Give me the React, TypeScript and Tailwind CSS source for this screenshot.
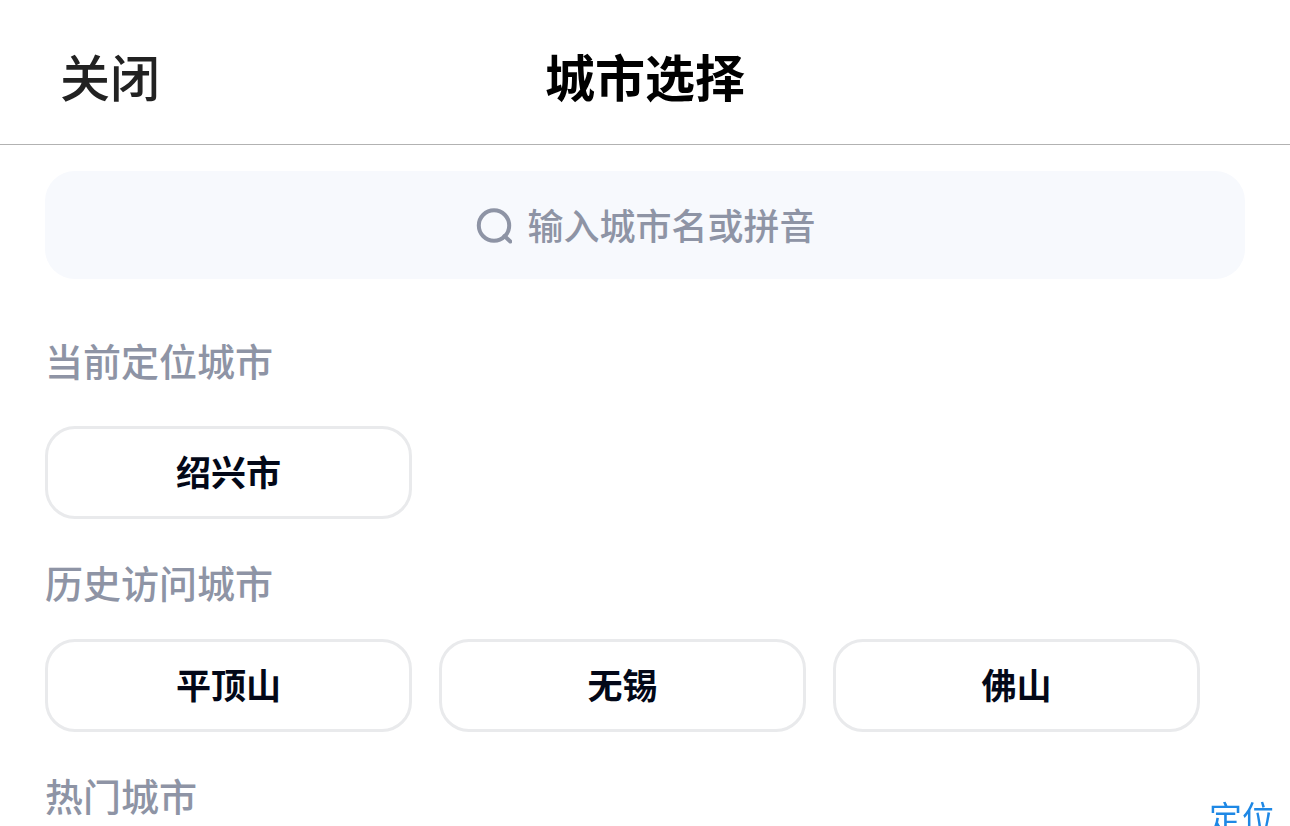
import React from "react";

const HISTORY_CITIES = ["平顶山", "无锡", "佛山"];

const SearchIcon = () => (
  <svg viewBox="0 0 36 36" className="w-9 h-9" fill="none" stroke="#8e94a5" strokeWidth="4" aria-hidden="true">
    <circle cx="18" cy="17.5" r="15.2" />
    <path d="M28.5 28L34.3 33.5" strokeLinecap="round" />
  </svg>
);

const SectionTitle = ({ children }: { children: React.ReactNode }) => (
  <h2 className="text-[38px] leading-[54px] font-medium text-[#8e94a5]">{children}</h2>
);

const CityButton = ({ name }: { name: string }) => (
  <button
    type="button"
    className="h-[93px] pb-0.5 rounded-[30px] border-3 border-[#e9eaec] bg-white text-[35px] font-bold text-[#030818]"
  >
    {name}
  </button>
);

const App: React.FC = () => {
  return (
    <div className="h-screen overflow-hidden bg-white font-['Noto_Sans_CJK_SC',sans-serif]">
      <header className="grid grid-cols-3 items-center h-[145px] pt-2 pb-0.5 px-[60px] border-b border-[#b2b2b2]">
        <button type="button" className="justify-self-start text-[50px] leading-[72px] font-medium text-[#222222]">关闭</button>
        <h1 className="text-center text-[50px] leading-[72px] font-bold text-black">城市选择</h1>
      </header>

      <main className="px-[45px] pt-[26px]">
        <label className="flex items-center justify-center gap-4 h-[108px] pt-px rounded-[30px] bg-[#f7f9fd]">
          <SearchIcon />
          <input
            type="text"
            aria-label="城市搜索"
            placeholder="输入城市名或拼音"
            className="w-[287px] pb-1 bg-transparent text-[36px] leading-[54px] font-medium outline-none placeholder:text-[#8e94a5] placeholder:opacity-100"
          />
        </label>

        <section className="mt-[54px]">
          <SectionTitle>当前定位城市</SectionTitle>
          <div className="grid grid-cols-3 gap-[27px] mt-[39px] mr-[45px]">
            <CityButton name="绍兴市" />
          </div>
        </section>

        <section className="mt-9">
          <SectionTitle>历史访问城市</SectionTitle>
          <div className="grid grid-cols-3 gap-[27px] mt-[30px] mr-[45px]">
            {HISTORY_CITIES.map((city) => (
              <CityButton key={city} name={city} />
            ))}
          </div>
        </section>

        <section className="mt-9">
          <SectionTitle>热门城市</SectionTitle>
        </section>
      </main>

      {/* index shortcut, floats over the list */}
      <a href="#location" className="fixed right-[15px] top-[793px] text-[33px] leading-[46px] text-[#1e88e5]">定位</a>
    </div>
  );
};

export default App;
